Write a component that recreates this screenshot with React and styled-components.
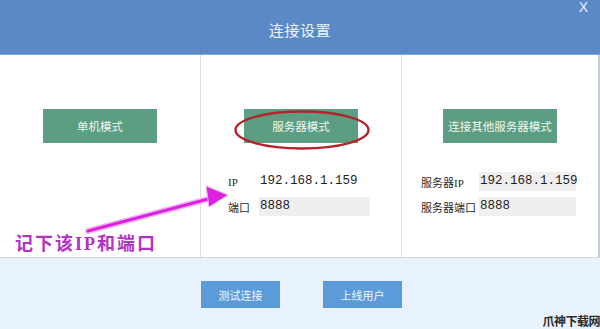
import styled, { createGlobalStyle } from 'styled-components';

const GlobalStyle = createGlobalStyle`
  html, body {
    margin: 0;
    padding: 0;
    background: #ffffff;
  }
  body {
    font-family: "Noto Sans CJK SC", "Noto Sans", sans-serif;
  }
`;

const modes = [
  {
    title: '单机模式',
    fields: [],
  },
  {
    title: '服务器模式',
    circled: true,
    labelWidth: 31,
    inset: 27,
    inputWidth: 111,
    fields: [
      { label: 'IP', value: '192.168.1.159', boxed: false },
      { label: '端口', value: '8888', boxed: true },
    ],
  },
  {
    title: '连接其他服务器模式',
    labelWidth: 58,
    inset: 19,
    inputWidth: 97,
    fields: [
      { label: '服务器IP', value: '192.168.1.159', boxed: true },
      { label: '服务器端口', value: '8888', boxed: true },
    ],
  },
];

const App = () => {
  return (
    <>
      <GlobalStyle />
      <Dialog>
        <Header>
          <Title>连接设置</Title>
          <Close>X</Close>
        </Header>
        <Body>
          {modes.map(mode => (
            <Column key={mode.title}>
              <ButtonWrap>
                <ModeButton>{mode.title}</ModeButton>
                {mode.circled && (
                  <Circle viewBox="0 0 136 40" width="136" height="40">
                    <ellipse
                      cx="68"
                      cy="20"
                      rx="66.5"
                      ry="18.5"
                      fill="none"
                      stroke="#b3242c"
                      strokeWidth="2.4"
                    />
                  </Circle>
                )}
              </ButtonWrap>
              {mode.fields.length > 0 && (
                <Fields inset={mode.inset}>
                  {mode.fields.map(field => (
                    <FieldRow
                      key={field.label}
                      labelWidth={mode.labelWidth}
                      inputWidth={mode.inputWidth}
                    >
                      <Label>{field.label}</Label>
                      <Value boxed={field.boxed}>{field.value}</Value>
                    </FieldRow>
                  ))}
                </Fields>
              )}
            </Column>
          ))}
        </Body>
        <Footer>
          <FooterButton>测试连接</FooterButton>
          <FooterButton>上线用户</FooterButton>
        </Footer>

        <Arrow viewBox="0 0 600 329" width="600" height="329">
          <line x1="88" y1="231" x2="212" y2="198" stroke="#f4b8f4" strokeWidth="6" strokeLinecap="round" />
          <line x1="88" y1="231" x2="212" y2="198" stroke="#dc22e0" strokeWidth="3" strokeLinecap="round" />
          <polygon points="206,186 228,195 209,207" fill="#dc22e0" stroke="#f0b0f0" strokeWidth="1" />
        </Arrow>
        <Note>记下该IP和端口</Note>
        <Watermark>爪神下载网</Watermark>
      </Dialog>
    </>
  );
};

export default App;

const Dialog = styled.div`
  position: relative;
  width: 600px;
  height: 329px;
  overflow: hidden;
  background: #ffffff;
  display: flex;
  flex-direction: column;
`;

const Header = styled.div`
  position: relative;
  height: 54px;
  background: #5a8ac6;
  border-bottom: 1px solid #86aad8;
  display: flex;
  align-items: center;
  justify-content: center;
  flex-shrink: 0;
`;

const Title = styled.div`
  color: #eef3fb;
  font-size: 15px;
  letter-spacing: 0.5px;
  margin-top: 4px;
`;

const Close = styled.span`
  position: absolute;
  right: 12px;
  top: 0;
  color: #e8f0fa;
  font-family: "Liberation Sans", sans-serif;
  font-size: 14px;
  line-height: 15px;
`;

const Body = styled.div`
  height: 202px;
  display: grid;
  grid-template-columns: 201px 201px 196px;
  border-right: 2px solid #c9cdd2;
  border-bottom: 1px solid #d6d9dc;
`;

const Column = styled.div`
  display: flex;
  flex-direction: column;
  align-items: center;
  padding-top: 54px;
  border-right: 1px solid #dcdcdc;
  &:last-child {
    border-right: none;
  }
`;

const ButtonWrap = styled.div`
  position: relative;
`;

const ModeButton = styled.div`
  width: 114px;
  height: 34px;
  background: #5b9e81;
  color: #eef7f1;
  font-size: 11.5px;
  display: flex;
  align-items: center;
  justify-content: center;
  white-space: nowrap;
`;

const Circle = styled.svg`
  position: absolute;
  left: -10px;
  top: 1px;
  overflow: visible;
`;

const Fields = styled.div`
  align-self: stretch;
  padding-left: ${({ inset }) => inset}px;
  margin-top: 29px;
  display: flex;
  flex-direction: column;
  gap: 6px;
`;

const FieldRow = styled.div`
  display: grid;
  grid-template-columns: ${({ labelWidth, inputWidth }) => `${labelWidth}px ${inputWidth}px`};
  align-items: center;
  height: 19px;
`;

const Label = styled.span`
  font-family: "Liberation Serif", "Noto Sans CJK SC", serif;
  font-size: 11px;
  font-weight: 400;
  color: #2a2a2a;
  white-space: nowrap;
`;

const Value = styled.div`
  height: 19px;
  line-height: 19px;
  padding-left: 1px;
  background: ${({ boxed }) => (boxed ? '#efefef' : 'transparent')};
  font-family: "Liberation Mono", monospace;
  font-size: 12.5px;
  color: #1e1e1e;
  white-space: nowrap;
`;

const Footer = styled.div`
  flex: 1;
  background: #e7f2fc;
  display: flex;
  justify-content: center;
  align-items: flex-start;
  gap: 43px;
  padding-top: 23px;
  padding-left: 3px;
`;

const FooterButton = styled.div`
  width: 79px;
  height: 27px;
  background: #5c9bd9;
  color: #eef5fc;
  font-size: 11px;
  display: flex;
  align-items: center;
  justify-content: center;
`;

const Arrow = styled.svg`
  position: absolute;
  left: 0;
  top: 0;
  pointer-events: none;
`;

const Note = styled.div`
  position: absolute;
  left: 15px;
  top: 233px;
  color: #b332c6;
  font-family: "Liberation Serif", "Noto Sans CJK SC", serif;
  font-size: 18px;
  font-weight: 700;
  letter-spacing: 2px;
  line-height: 22px;
  white-space: nowrap;
`;

const Watermark = styled.div`
  position: absolute;
  right: 0;
  bottom: 0;
  color: #2b2b2b;
  font-size: 12px;
  font-weight: 700;
  line-height: 16px;
  letter-spacing: -0.5px;
`;
